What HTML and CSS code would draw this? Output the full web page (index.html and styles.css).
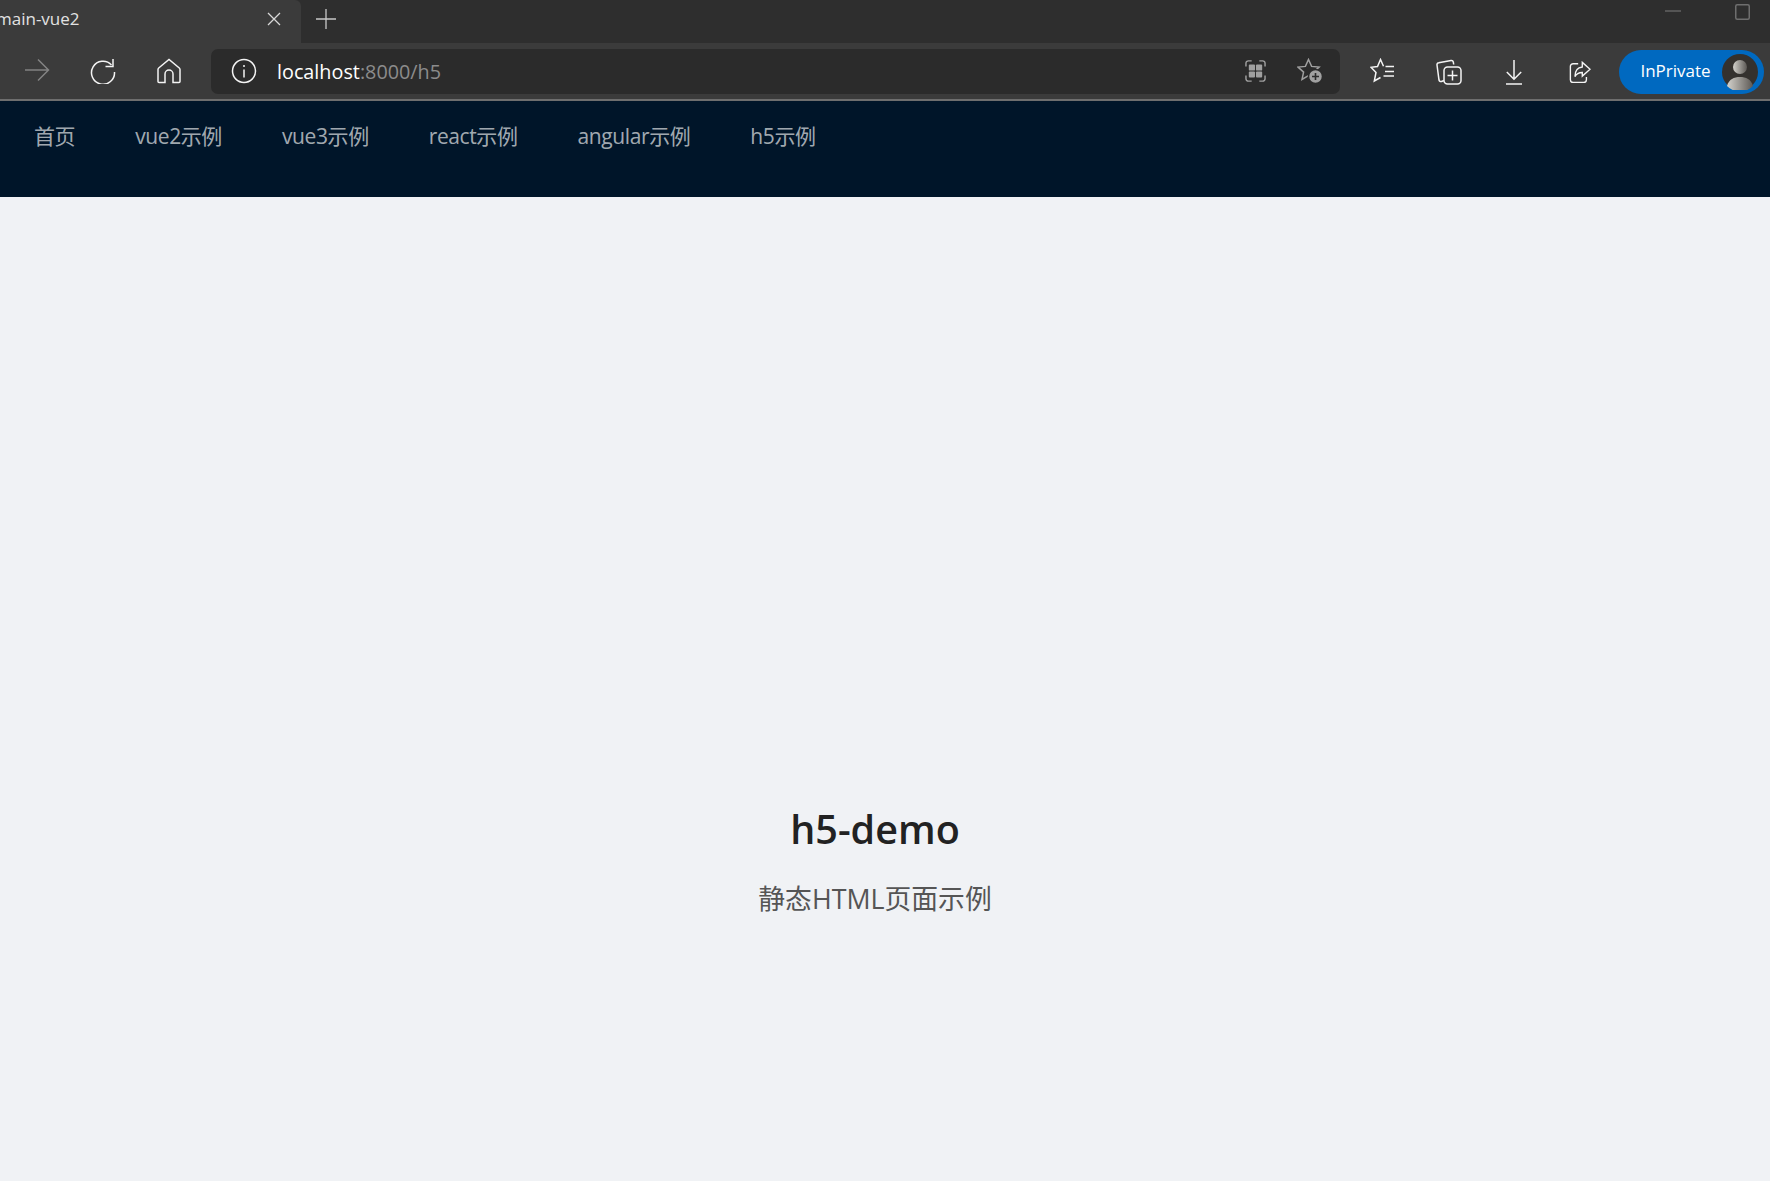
FILE: index.html
```html
<!DOCTYPE html>
<html lang="zh-CN">
<head>
<meta charset="utf-8">
<title>main-vue2</title>
<link rel="stylesheet" href="styles.css">
</head>
<body>
<div class="chrome">
  <div class="titlebar">
    <div class="tab">
      <span class="tab-title">main-vue2</span>
      <svg class="tab-close" width="14" height="14" viewBox="0 0 14 14"><path d="M1 1l12 12M13 1L1 13"/></svg>
    </div>
    <svg class="new-tab" width="20" height="20" viewBox="0 0 20 20"><path d="M10 0v20M0 10h20"/></svg>
    <div class="win-controls">
      <svg class="win-min" width="16" height="2" viewBox="0 0 16 2"><path d="M0 1h16"/></svg>
      <svg class="win-max" width="15" height="16" viewBox="0 0 15 16"><rect x=".75" y=".75" width="13.5" height="14.5" rx="1.5"/></svg>
    </div>
  </div>
  <div class="toolbar">
    <svg class="ico ico-back" width="26" height="24" viewBox="0 0 26 24"><path d="M1 12h23M14 1.500l10.500 10.500L14 22.500"/></svg>
    <svg class="ico ico-reload" width="26" height="26" viewBox="0 0 26 26"><path d="M23 1v7.500h-7.500"/><path d="M21.500 7A11.500 11.500 0 1 0 24.500 14"/></svg>
    <svg class="ico ico-home" width="24" height="26" viewBox="0 0 24 26"><path d="M2 24.500h6V16a4 4 0 0 1 8 0v8.500h6a1 1 0 0 0 1-1V11.500a2 2 0 0 0-.7-1.500L12 1.500 1.700 10A2 2 0 0 0 1 11.500v12a1 1 0 0 0 1 1z"/></svg>
    <div class="address">
      <svg class="ico ico-info" width="26" height="26" viewBox="0 0 26 26"><circle cx="13" cy="13" r="11.500"/><path d="M13 11.500v8M13 7v2"/></svg>
      <span class="url"><span class="host">localhost</span><span class="port">:8000/h5</span></span>
      <svg class="ico ico-grid" width="21" height="22" viewBox="0 0 22 24" preserveAspectRatio="none"><path d="M1 7V3.500A2.500 2.500 0 0 1 3.500 1H7M15 1h3.500A2.500 2.500 0 0 1 21 3.500V7M21 17v3.500a2.500 2.500 0 0 1-2.500 2.500H15M7 23H3.500A2.500 2.500 0 0 1 1 20.500V17"/><rect class="fill" x="4" y="5" width="6.500" height="6.500" rx="1"/><rect class="fill" x="11.500" y="5" width="6.500" height="6.500" rx="1"/><rect class="fill" x="4" y="12.500" width="6.500" height="6.500" rx="1"/><rect class="fill" x="11.500" y="12.500" width="6.500" height="6.500" rx="1"/></svg>
      <svg class="ico ico-addfav" width="26" height="26" viewBox="0 0 26 26"><path d="M11.500 1.500l3.100 6.900 7.500.7-5.600 5 1.600 7.300-6.600-3.800-6.500 3.800 1.600-7.300L1 9.100l7.400-.7z"/><circle class="badge" cx="18.500" cy="18.500" r="7"/><path class="badge-plus" d="M18.500 15v7M15 18.500h7"/></svg>
    </div>
    <svg class="ico ico-fav" width="25" height="26" viewBox="0 0 25 26"><path d="M13.500 8.300L10.500 1.500 7.500 8.500 1 9.300l5 5.100-1.700 8.600 6.200-3.500"/><path d="M15.500 8.500H24M15 13.500h9M13.500 18h10.500"/></svg>
    <svg class="ico ico-coll" width="26" height="26" viewBox="0 0 26 26"><path d="M8 21.500l-2.500 1A2 2 0 0 1 3 21L1 6a2 2 0 0 1 1.700-2.300L15 1.500a2 2 0 0 1 2.300 1.500l.4 2.500"/><rect x="8" y="8" width="17" height="17" rx="3.500"/><path d="M16.500 11.500v10M11.500 16.500h10"/></svg>
    <svg class="ico ico-down" width="18" height="26" viewBox="0 0 18 26"><path d="M9 1v19M1.800 13L9 20.200 16.200 13M1 25h16"/></svg>
    <svg class="ico ico-share" width="22" height="22" viewBox="0 0 24 24"><path d="M10 3H4.500A3 3 0 0 0 1.500 6v14.500a3 3 0 0 0 3 3h11.500a3 3 0 0 0 3-3v-3"/><path d="M14.500 1.500L23 9l-8.500 7.500V12.500c-4 0-6.500 1.500-8 4.500 0-6 3-10 8-10.500z"/></svg>
    <div class="pill">
      <span class="pill-label">InPrivate</span>
      <span class="avatar"><svg width="36" height="36" viewBox="0 0 36 36"><defs><linearGradient id="person"><stop offset="0" stop-color="#d4d2cc"/><stop offset="1" stop-color="#5c5854"/></linearGradient></defs><circle cx="18" cy="18" r="18" fill="#34312e"/><circle cx="18" cy="13" r="7" fill="url(#person)"/><path d="M5 32c2-7 7-9 13-9s11 2 13 9a18 18 0 0 1-26 0z" fill="url(#person)"/></svg></span>
    </div>
  </div>
</div>
<nav class="nav">
  <a class="nav-item">首页</a>
  <a class="nav-item">vue2示例</a>
  <a class="nav-item">vue3示例</a>
  <a class="nav-item">react示例</a>
  <a class="nav-item">angular示例</a>
  <a class="nav-item">h5示例</a>
</nav>
<main class="content">
  <h1 class="title">h5-demo</h1>
  <p class="subtitle">静态HTML页面示例</p>
</main>
</body>
</html>
```
FILE: styles.css
```css
* { box-sizing: border-box; }
html, body { margin: 0; height: 100%; }
body {
  width: 1770px;
  height: 1181px;
  overflow: hidden;
  background: #f0f2f5;
  font-family: "Open Sans", "Noto Sans CJK SC", sans-serif;
}
.chrome { background: #3b3b3b; }
.titlebar {
  height: 43px;
  background: #2e2e2e;
  display: flex;
  align-items: center;
}
.tab {
  width: 301px;
  height: 43px;
  background: #3b3b3b;
  border-top-right-radius: 6px;
  display: flex;
  align-items: center;
  overflow: hidden;
  position: relative;
}
.tab-title {
  margin-left: -4px;
  padding-bottom: 7px;
  font-size: 17px;
  color: #e2e2e2;
  flex: 1;
  white-space: nowrap;
}
.tab-close { margin-right: 20px; margin-bottom: 5px; fill: none; stroke: #d8d8d8; stroke-width: 1.300; }
.new-tab { margin-left: 15px; margin-bottom: 6px; fill: none; stroke: #c8c8c8; stroke-width: 1.300; }
.win-controls {
  margin-left: auto;
  align-self: flex-start;
  display: flex;
  align-items: flex-start;
  padding-right: 20px;
}
.win-min { margin-top: 10px; margin-right: 54px; fill: none; stroke: #7d7d7d; stroke-width: 1; }
.win-max { margin-top: 4px; fill: none; stroke: #6e6e6e; stroke-width: 1.500; }
.toolbar {
  height: 58px;
  display: flex;
  align-items: center;
  padding: 6px 6px 5px 24px;
  border-bottom: 2px solid #6e6e6e;
}
.ico { flex: none; fill: none; stroke: #f4f4f4; stroke-width: 1.500; }
.ico-back { stroke: #838383; margin-bottom: 3px; }
.ico-reload { margin-left: 40px; margin-bottom: 2px; }
.ico-home { margin-left: 41px; margin-bottom: 2px; }
.address {
  margin-left: 30px;
  width: 1133px;
  height: 45px;
  background: #2b2b2b;
  border-radius: 7px;
  display: flex;
  align-items: center;
  padding-left: 20px;
}
.ico-info { margin-bottom: 1px; }
.url { margin-left: 20px; font-size: 19.800px; flex: 1; }
.host { color: #fff; }
.port { color: #8c8c8c; }
.ico-grid { stroke: #a0a0a0; margin-right: 31px; margin-bottom: 2px; }
.ico-grid .fill { fill: #a0a0a0; stroke: none; }
.ico-addfav { stroke: #a0a0a0; margin-right: 17px; margin-bottom: 1px; }
.ico-addfav .badge { fill: #a0a0a0; stroke: #2b2b2b; stroke-width: 1.500; }
.ico-addfav .badge-plus { stroke: #2b2b2b; stroke-width: 1.600; }
.ico-fav { margin-left: 30px; margin-bottom: 1px; }
.ico-coll { margin-left: 41px; }
.ico-down { margin-left: 43px; }
.ico-share { margin-left: 46px; }
.pill {
  margin-left: 28px;
  width: 145px;
  height: 44px;
  border-radius: 22px;
  background: #0069c0;
  display: flex;
  align-items: center;
  padding-left: 21px;
}
.pill-label { color: #fff; font-size: 17px; flex: 1; padding-bottom: 2px; }
.avatar { width: 36px; height: 36px; margin-right: 6px; display: block; }
.avatar svg { display: block; }
.nav {
  height: 96px;
  background: #001529;
  display: flex;
  gap: 60px;
  padding: 0 34px;
  align-items: flex-start;
}
.nav-item {
  color: rgba(255, 255, 255, 0.65);
  font-size: 21px;
  letter-spacing: -0.400px;
  line-height: 70px;
}
.content {
  padding: 605px 20px 0 0;
  text-align: center;
}
.title {
  margin: 0;
  font-size: 39.500px;
  font-weight: 600;
  line-height: 54px;
  color: #222;
}
.subtitle {
  margin: 24px 0 0;
  font-size: 26.800px;
  line-height: 38px;
  color: #555;
}
```
